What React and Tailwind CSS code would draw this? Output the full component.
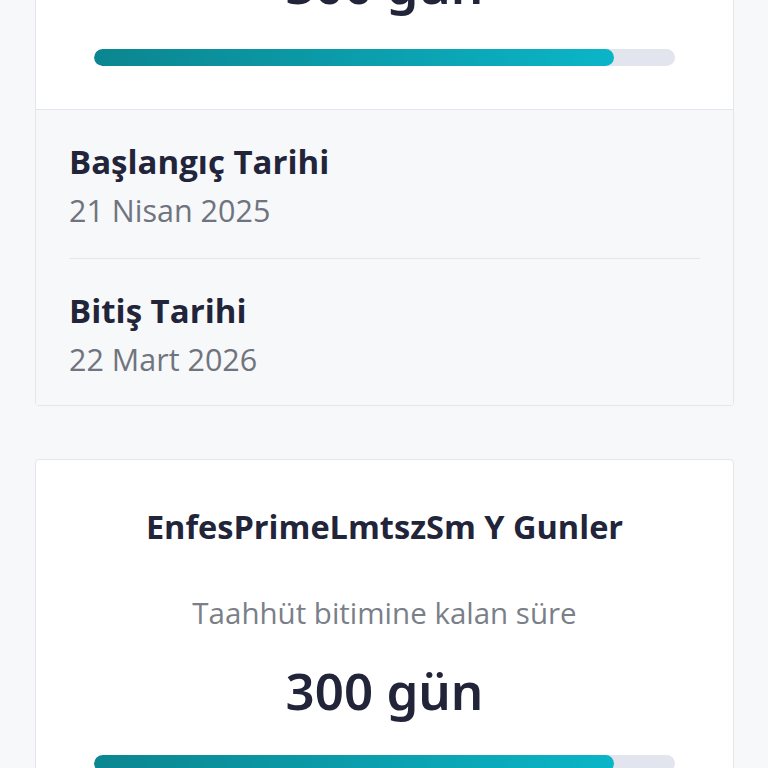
import React from 'react';

const font = { fontFamily: '"Open Sans", "Noto Sans", sans-serif' };

const plans = [
    {
        name: 'EnfesPrimeLmtszSm Y Gunler',
        remaining: 300,
        percent: 89.5,
        start: '21 Nisan 2025',
        end: '22 Mart 2026',
    },
    {
        name: 'EnfesPrimeLmtszSm Y Gunler',
        remaining: 300,
        percent: 89.5,
        start: '21 Nisan 2025',
        end: '22 Mart 2026',
    },
];

const DateRow = ({ label, value, last }) => (
    <div className={`pt-[34px] ${last ? 'pb-[29px]' : 'pb-[31px] border-b border-[#e3e6eb]'}`}>
        <p className="text-[33px] leading-[36px] font-bold text-[#22253a]">{label}</p>
        <p className="mt-[13px] text-[30.5px] leading-[34px] text-[#6f747e]">{value}</p>
    </div>
);

const CommitmentCard = ({ plan }) => (
    <div className="bg-white border border-[#e3e6eb] rounded-[4px] overflow-hidden">
        {/* Top: remaining time */}
        <div className="pt-[47px] pb-[43px] px-[58px] flex flex-col items-center text-center">
            <h2 className="text-[32.5px] leading-[40px] font-bold text-[#22253a] whitespace-nowrap">{plan.name}</h2>
            <p className="mt-[48px] text-[29.5px] leading-[36px] text-[#7a7f88]">Taahhüt bitimine kalan süre</p>
            <p className="mt-[27px] text-[51px] leading-[64px] font-semibold text-[#22253a]" style={{ fontFamily: '"Noto Sans", sans-serif' }}>
                {plan.remaining} gün
            </p>
            <div className="mt-[33px] w-full h-[17px] rounded-full bg-[#e2e5ee] overflow-hidden">
                <div
                    className="h-full rounded-full bg-gradient-to-r from-[#0b8690] to-[#0ab5c7]"
                    style={{ width: `${plan.percent}%` }}
                ></div>
            </div>
        </div>

        {/* Bottom: dates */}
        <div className="border-t border-[#e3e6eb] bg-[#f7f8fa] px-[33px]">
            <DateRow label="Başlangıç Tarihi" value={plan.start} />
            <DateRow label="Bitiş Tarihi" value={plan.end} last />
        </div>
    </div>
);

export default function App() {
    return (
        <div className="min-h-screen bg-[#f7f8fa] overflow-hidden" style={font}>
            <div className="-mt-[247px] pl-[35px] pr-[34px] flex flex-col gap-[53px] pb-10">
                {plans.map((plan, i) => (
                    <CommitmentCard key={i} plan={plan} />
                ))}
            </div>
        </div>
    );
}
